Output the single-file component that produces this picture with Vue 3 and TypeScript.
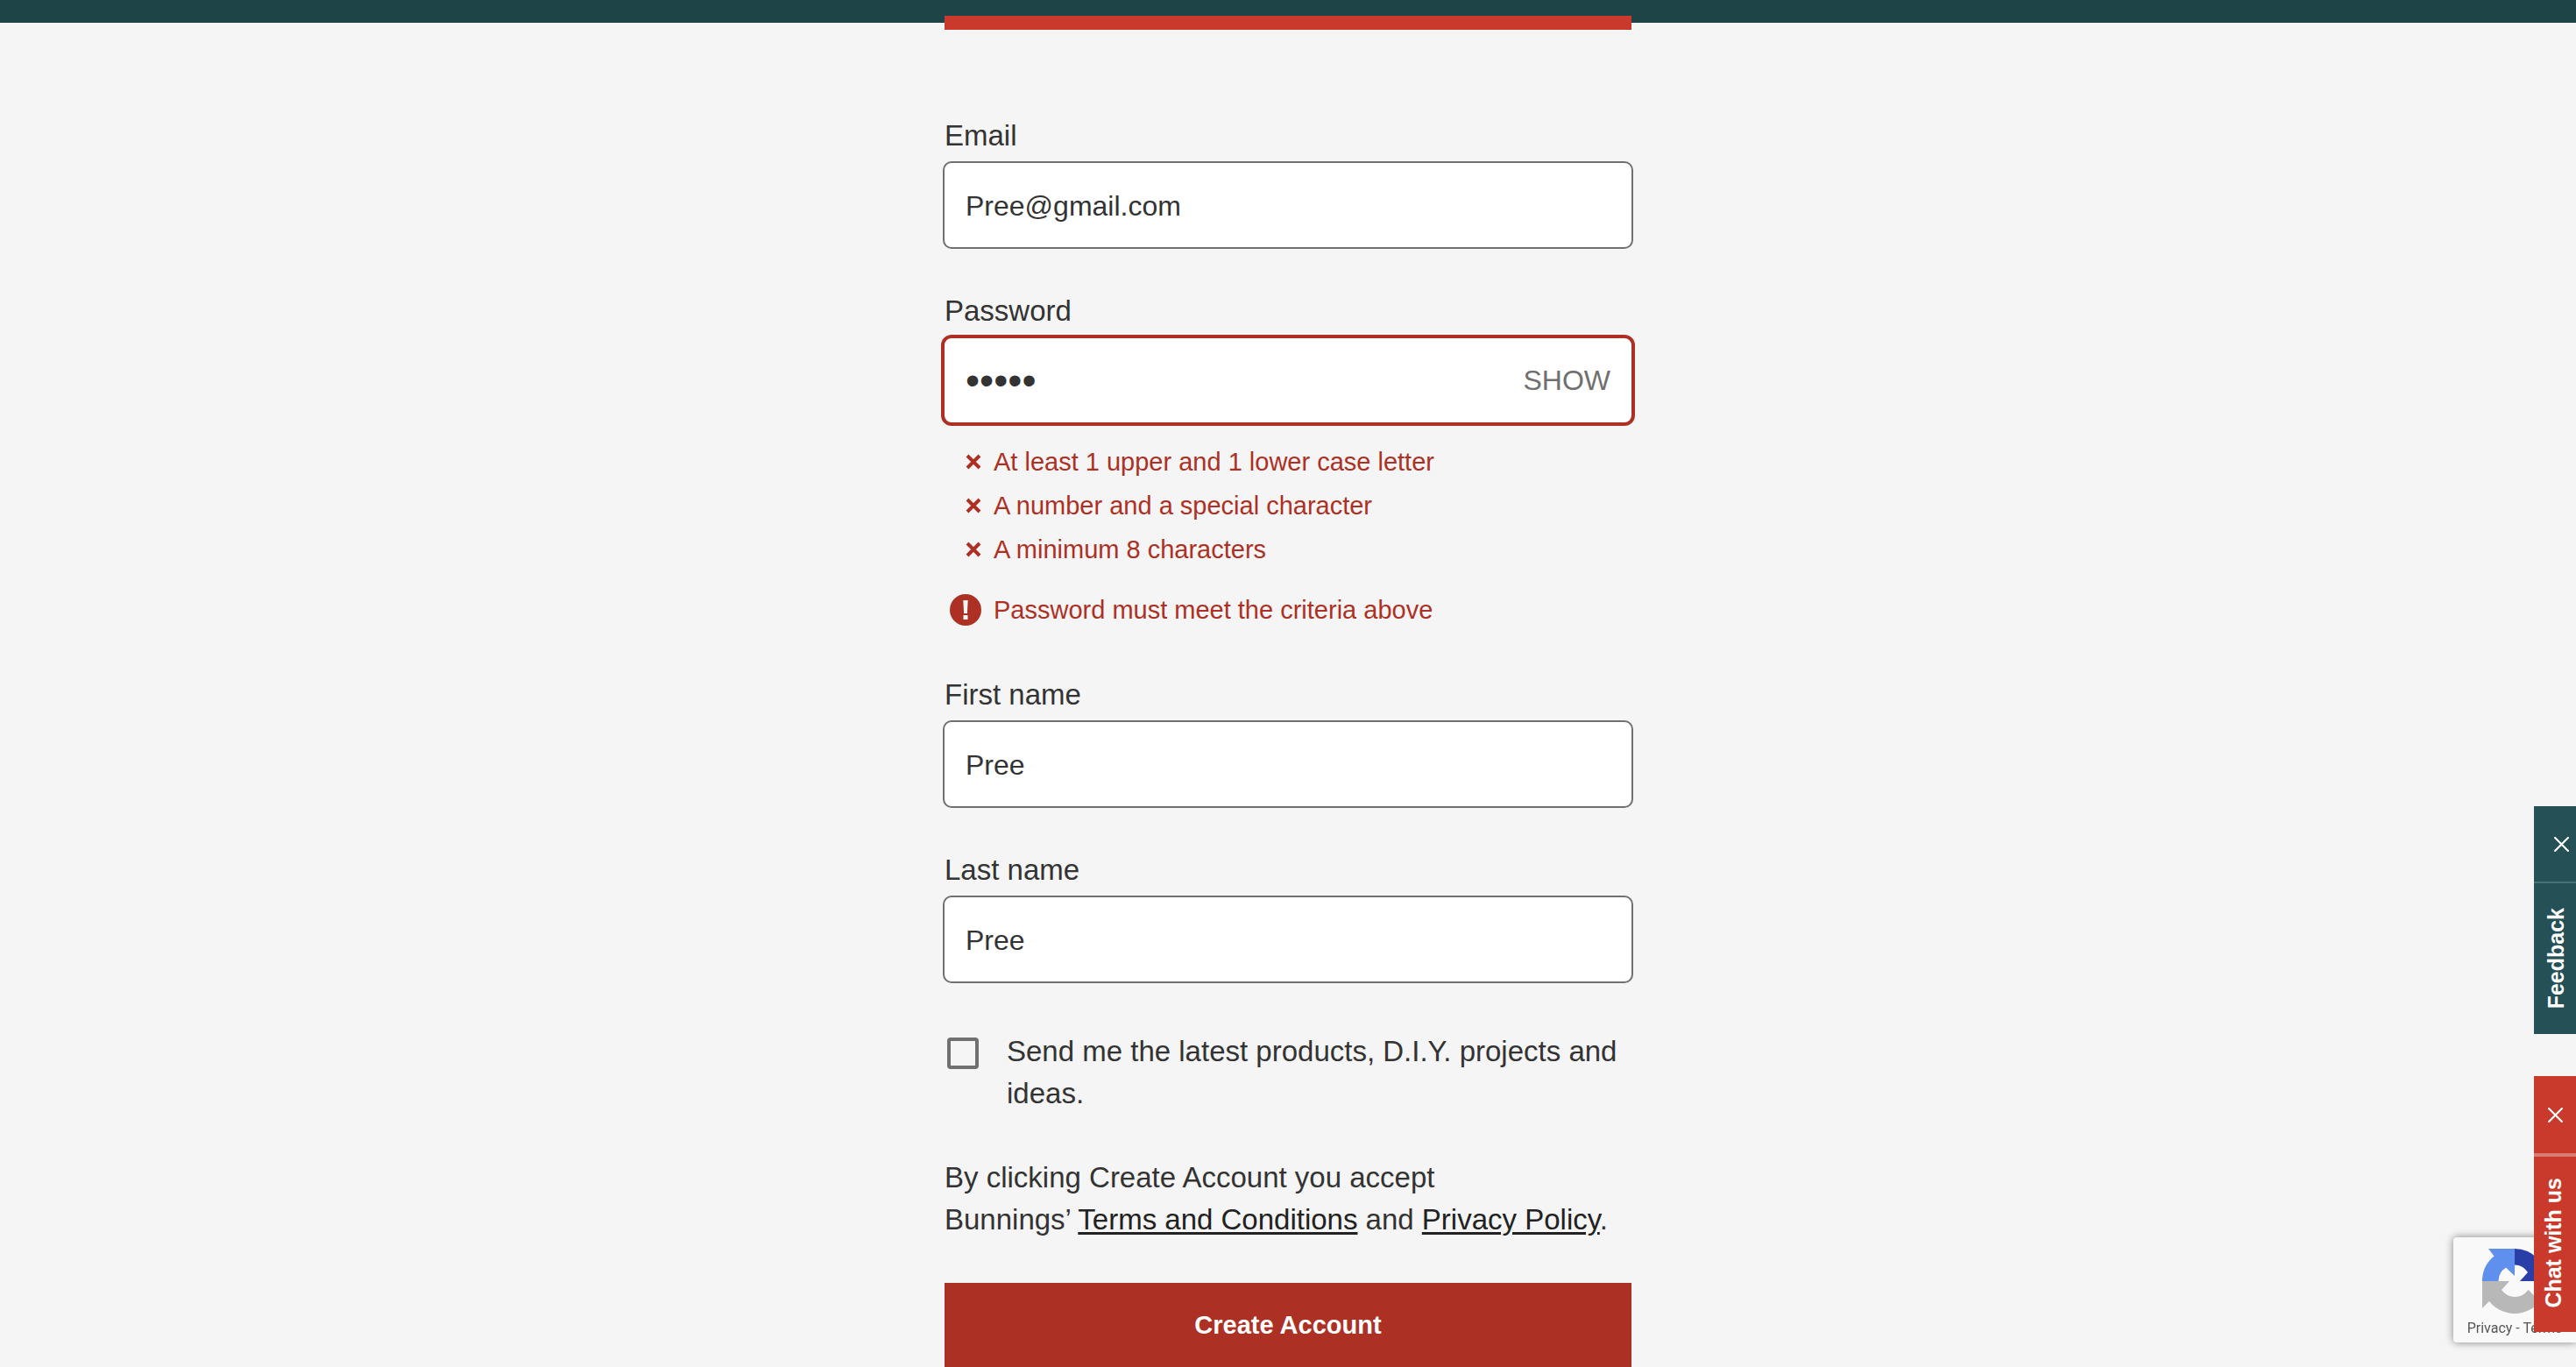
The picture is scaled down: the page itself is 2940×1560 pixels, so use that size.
<script setup lang="ts">
import { ref } from 'vue'

const email = ref('Pree@gmail.com')
const password = ref('Pree1')
const firstName = ref('Pree')
const lastName = ref('Pree')
const subscribe = ref(false)
const revealed = ref(false)
const showFeedback = ref(true)
const showChat = ref(true)

const criteria: string[] = [
  'At least 1 upper and 1 lower case letter',
  'A number and a special character',
  'A minimum 8 characters',
]
</script>

<template>
  <div class="page">
    <header class="topbar"></header>
    <main class="card">
      <div class="accent"></div>
      <form class="form" @submit.prevent>
        <div class="field">
          <label for="email">Email</label>
          <div class="box"><input id="email" v-model="email" type="text" autocomplete="off" /></div>
        </div>

        <div class="field">
          <label for="password">Password</label>
          <div class="box invalid">
            <input id="password" v-model="password" :type="revealed ? 'text' : 'password'" autocomplete="off" />
            <button type="button" class="show" @click="revealed = !revealed">SHOW</button>
          </div>
        </div>

        <ul class="criteria">
          <li v-for="item in criteria" :key="item">
            <svg class="cross" viewBox="0 0 18 18" aria-hidden="true">
              <path d="M2 2 16 16M16 2 2 16" stroke="currentColor" stroke-width="4" />
            </svg>
            <span>{{ item }}</span>
          </li>
        </ul>
        <p class="error" role="alert">
          <svg class="alert" viewBox="0 0 36 36" aria-hidden="true">
            <circle cx="18" cy="18" r="18" fill="currentColor" />
            <path d="M15.3 7h5.4l-.8 15h-3.800zM15.500 24h5v5h-5z" fill="#f5f5f5" />
          </svg>
          <span>Password must meet the criteria above</span>
        </p>

        <div class="field">
          <label for="first">First name</label>
          <div class="box"><input id="first" v-model="firstName" type="text" autocomplete="off" /></div>
        </div>

        <div class="field">
          <label for="last">Last name</label>
          <div class="box"><input id="last" v-model="lastName" type="text" autocomplete="off" /></div>
        </div>

        <div class="optin">
          <input id="subscribe" v-model="subscribe" type="checkbox" />
          <label for="subscribe">Send me the latest products, D.I.Y. projects and ideas.</label>
        </div>

        <p class="terms">
          By clicking Create Account you accept<br />
          Bunnings’ <a href="#terms">Terms and Conditions</a> and <a href="#privacy">Privacy Policy</a>.
        </p>

        <button type="submit" class="submit">Create Account</button>
      </form>
    </main>

    <aside class="captcha">
      <svg class="captcha-logo" viewBox="0 0 74 74" aria-hidden="true">
        <path d="M37 0A37 37 0 0 1 63 11L74 0V37H43L52 27A18 18 0 0 0 37 18.500z" fill="#2a3ea8" />
        <path d="M37 0V31L27 21.500A18.500 18.500 0 0 0 18.500 37H0A37 37 0 0 1 13.500 8.500L7 0z" fill="#5f90ee" />
        <path d="M0 37H31L22 47A18.500 18.500 0 0 0 52.500 47L66 60A37 37 0 0 1 8 60L0 68z" fill="#b8b8b8" />
      </svg>
      <div class="captcha-links"><a href="#p">Privacy</a> - <a href="#t">Terms</a></div>
    </aside>

    <div v-if="showFeedback" class="tab feedback">
      <button type="button" class="close" aria-label="Close feedback" @click="showFeedback = false">
        <svg viewBox="0 0 16 16" aria-hidden="true">
          <path d="M1 1 15 15M15 1 1 15" stroke="currentColor" stroke-width="2" stroke-linecap="round" />
        </svg>
      </button>
      <button type="button" class="open"><span>Feedback</span></button>
    </div>

    <div v-if="showChat" class="tab chat">
      <button type="button" class="close" aria-label="Close chat" @click="showChat = false">
        <svg viewBox="0 0 16 16" aria-hidden="true">
          <path d="M1 1 15 15M15 1 1 15" stroke="currentColor" stroke-width="2" stroke-linecap="round" />
        </svg>
      </button>
      <button type="button" class="open"><span>Chat with us</span></button>
    </div>
  </div>
</template>

<style>
body {
  margin: 0;
  background: #f5f5f5;
}
</style>

<style scoped>
.page {
  font-family: "Liberation Sans", Arial, sans-serif;
  font-size: 33px;
  line-height: 48px;
  color: #333;
  min-height: 100vh;
}

.page *,
.page *::before {
  box-sizing: border-box;
}

button,
input {
  font: inherit;
  color: inherit;
  margin: 0;
  padding: 0;
  border: 0;
  background: none;
}

.topbar {
  height: 26px;
  background: #1e4448;
}

.card {
  width: 784px;
  max-width: 100%;
  margin: -8px auto 0;
}

.accent {
  height: 16px;
  background: #c93a2c;
}

.form {
  display: flex;
  flex-direction: column;
  padding-top: 96px;
}

.field {
  margin-bottom: 48px;
}

.field label {
  display: block;
  height: 52px;
  line-height: 50px;
}

.field .box {
  display: flex;
  align-items: center;
  height: 100px;
  margin: 2px -2px -2px;
  border: 2px solid #707070;
  border-radius: 10px;
  background: #fff;
  font-size: 32px;
}

.box input {
  flex: 1;
  min-width: 0;
  height: 96px;
  padding: 2px 24px 0;
  outline: none;
}

.box input[type="password"] {
  padding-top: 0;
  font-size: 46px;
}

.box.invalid {
  border-color: #ad3024;
  box-shadow: 0 0 0 2px #ad3024;
}

.show {
  padding-right: 24px;
  color: #707070;
}

.criteria {
  list-style: none;
  margin: -28px 0 0;
  padding: 0 0 0 24px;
  font-size: 29px;
  line-height: 50px;
  color: #ad3024;
}

.criteria li {
  display: flex;
  align-items: center;
  gap: 14px;
}

.cross {
  width: 18px;
  height: 18px;
}

.error {
  display: flex;
  align-items: center;
  gap: 14px;
  margin: 20px 0 48px;
  padding-left: 6px;
  font-size: 29px;
  color: #ad3024;
}

.alert {
  width: 36px;
  height: 36px;
}

.optin {
  display: flex;
  align-items: flex-start;
  gap: 32px;
  margin-top: 8px;
  padding-left: 3px;
}

.optin input {
  appearance: none;
  flex: none;
  width: 36px;
  height: 36px;
  margin-top: 8px;
  border: 4px solid #707070;
  border-radius: 4px;
}

.terms {
  margin: 48px 0;
}

.terms a {
  color: #222;
  text-decoration: underline;
  text-decoration-thickness: 3px;
  text-underline-offset: 3px;
}

.submit {
  height: 96px;
  background: #ad3024;
  color: #fff;
  font-size: 29px;
  font-weight: bold;
}

.tab {
  position: fixed;
  right: 0;
  width: 48px;
  display: flex;
  flex-direction: column;
  color: #fff;
  font-size: 25px;
  font-weight: bold;
}

.tab .close {
  display: flex;
  align-items: center;
  justify-content: center;
}

.tab .close svg {
  width: 17px;
  height: 17px;
}

.tab .open {
  flex: 1;
  display: flex;
  align-items: center;
  justify-content: center;
}

.tab .open span {
  writing-mode: vertical-rl;
  transform: rotate(180deg);
  line-height: 28px;
}

.feedback {
  bottom: 380px;
  height: 260px;
  background: #255055;
}

.feedback .close {
  height: 88px;
  padding-left: 14px;
  border-bottom: 2px solid #467175;
}

.feedback .open {
  padding-left: 2px;
}

.chat {
  bottom: 40px;
  height: 292px;
  background: #c93a2c;
}

.chat .close {
  height: 92px;
  border-bottom: 4px solid #d87b73;
}

.chat .open {
  padding: 0 4px 4px 0;
}

.captcha {
  position: fixed;
  right: 0;
  bottom: 28px;
  width: 140px;
  height: 120px;
  padding-top: 13px;
  display: flex;
  flex-direction: column;
  align-items: center;
  background: #f9f9f9;
  border-radius: 4px 0 0 4px;
  box-shadow: 0 0 10px #808080;
  font-family: Roboto, sans-serif;
  font-size: 16px;
  line-height: 24px;
  color: #555;
}

.captcha-logo {
  width: 74px;
  height: 74px;
}

.captcha-links {
  margin-top: 5px;
}

.captcha-links a {
  color: inherit;
  text-decoration: none;
}
</style>
